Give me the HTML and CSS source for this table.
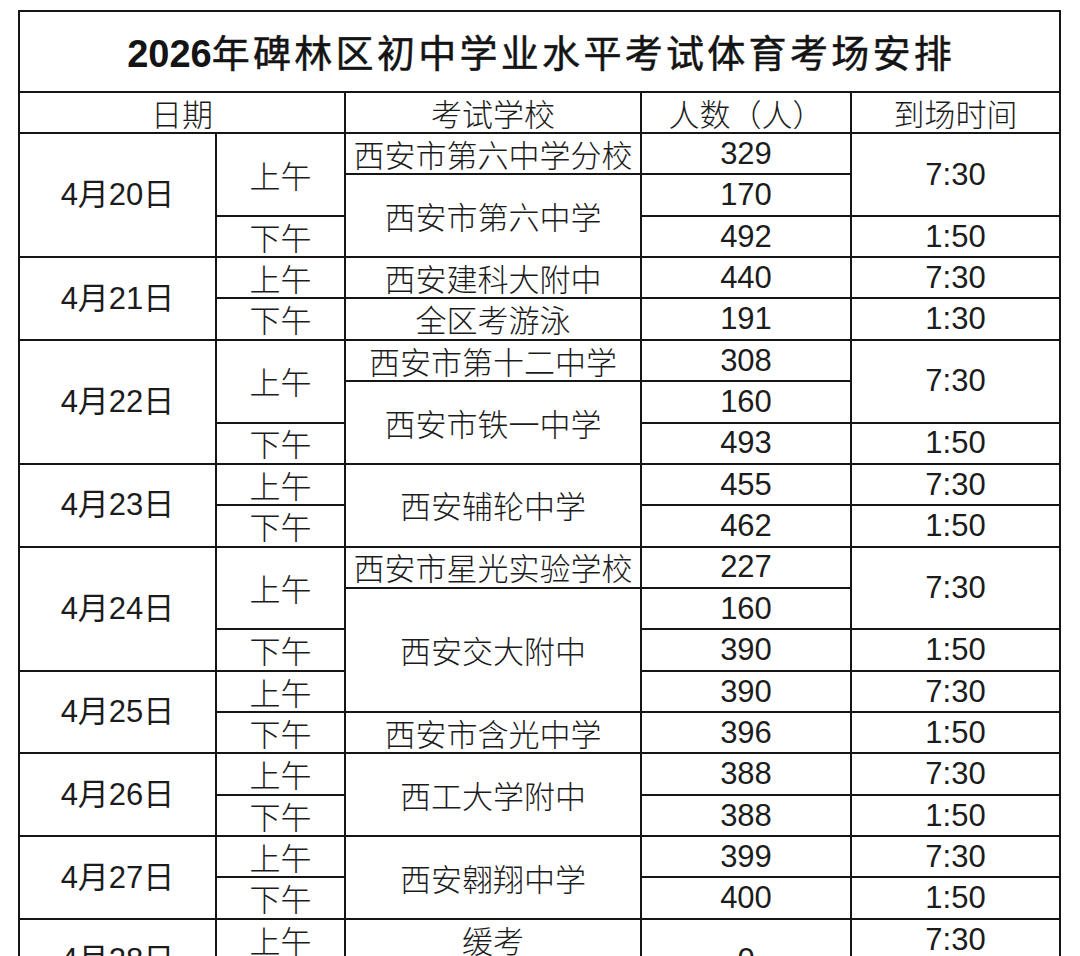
FILE: index.html
```html
<!DOCTYPE html>
<html lang="zh-CN">
<head>
<meta charset="utf-8">
<title>2026年碑林区初中学业水平考试体育考场安排</title>
<link rel="stylesheet" href="styles.css">
</head>
<body>
<table class="sheet">
  <colgroup>
    <col class="c-date"><col class="c-half"><col class="c-school"><col class="c-num"><col class="c-time">
  </colgroup>
  <tr class="title-row"><td colspan="5" class="title"><span class="yr">2026</span><span class="tt">年碑林区初中学业水平考试体育考场安排</span></td></tr>
  <tr class="head"><td colspan="2">日期</td><td>考试学校</td><td>人数（人）</td><td>到场时间</td></tr>

  <tr><td rowspan="3" class="num">4月20日</td><td rowspan="2">上午</td><td>西安市第六中学分校</td><td class="num">329</td><td rowspan="2" class="num">7:30</td></tr>
  <tr><td rowspan="2">西安市第六中学</td><td class="num">170</td></tr>
  <tr><td>下午</td><td class="num">492</td><td class="num">1:50</td></tr>

  <tr><td rowspan="2" class="num">4月21日</td><td>上午</td><td>西安建科大附中</td><td class="num">440</td><td class="num">7:30</td></tr>
  <tr><td>下午</td><td>全区考游泳</td><td class="num">191</td><td class="num">1:30</td></tr>

  <tr><td rowspan="3" class="num">4月22日</td><td rowspan="2">上午</td><td>西安市第十二中学</td><td class="num">308</td><td rowspan="2" class="num">7:30</td></tr>
  <tr><td rowspan="2">西安市铁一中学</td><td class="num">160</td></tr>
  <tr><td>下午</td><td class="num">493</td><td class="num">1:50</td></tr>

  <tr><td rowspan="2" class="num">4月23日</td><td>上午</td><td rowspan="2">西安辅轮中学</td><td class="num">455</td><td class="num">7:30</td></tr>
  <tr><td>下午</td><td class="num">462</td><td class="num">1:50</td></tr>

  <tr><td rowspan="3" class="num">4月24日</td><td rowspan="2">上午</td><td>西安市星光实验学校</td><td class="num">227</td><td rowspan="2" class="num">7:30</td></tr>
  <tr><td rowspan="3">西安交大附中</td><td class="num">160</td></tr>
  <tr><td>下午</td><td class="num">390</td><td class="num">1:50</td></tr>

  <tr><td rowspan="2" class="num">4月25日</td><td>上午</td><td class="num">390</td><td class="num">7:30</td></tr>
  <tr><td>下午</td><td>西安市含光中学</td><td class="num">396</td><td class="num">1:50</td></tr>

  <tr><td rowspan="2" class="num">4月26日</td><td>上午</td><td rowspan="2">西工大学附中</td><td class="num">388</td><td class="num">7:30</td></tr>
  <tr><td>下午</td><td class="num">388</td><td class="num">1:50</td></tr>

  <tr><td rowspan="2" class="num">4月27日</td><td>上午</td><td rowspan="2">西安翱翔中学</td><td class="num">399</td><td class="num">7:30</td></tr>
  <tr><td>下午</td><td class="num">400</td><td class="num">1:50</td></tr>

  <tr><td rowspan="2" class="num">4月28日</td><td>上午</td><td>缓考</td><td rowspan="2" class="num">0</td><td class="num">7:30</td></tr>
  <tr><td>下午</td><td></td><td class="num">1:50</td></tr>
</table>
</body>
</html>
```

FILE: styles.css
```css
html, body {
  margin: 0;
  padding: 0;
  background: #ffffff;
  overflow: hidden;
}
body {
  padding: 10px 0 0 18px;
  height: 956px;
  box-sizing: border-box;
}
.sheet {
  border-collapse: collapse;
  table-layout: fixed;
  width: 1043px;
  color: #1c1c1c;
  font-family: "Noto Sans CJK SC", "Noto Sans", sans-serif;
  font-size: 31px;
  font-weight: 300;
}
.c-date { width: 197px; }
.c-half { width: 129px; }
.c-school { width: 296px; }
.c-num { width: 210px; }
.c-time { width: 209px; }
.sheet td {
  border: 2px solid #151515;
  padding: 0;
  text-align: center;
  vertical-align: middle;
  line-height: 1.15;
  white-space: nowrap;
}
.sheet tr { height: 41.37px; }
.sheet tr.title-row { height: 81px; }
.sheet tr.head { height: 41px; }
.sheet td.title {
  color: #141414;
  padding-top: 2px;
}
.sheet .tt {
  font-size: 38px;
  font-weight: 400;
  -webkit-text-stroke: 0.5px #141414;
  letter-spacing: 3.3px;
  margin-right: -3.3px;
}
.sheet .yr {
  font-family: "Liberation Sans", Arial, sans-serif;
  font-weight: 700;
  font-size: 38px;
}
.sheet td.num {
  font-family: "Liberation Sans", "Noto Sans CJK SC", sans-serif;
  font-weight: 400;
}
```
